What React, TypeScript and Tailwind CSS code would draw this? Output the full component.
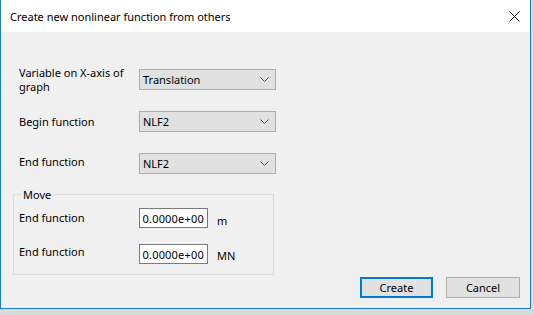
import React from "react";

const font = { fontFamily: '"Noto Sans", "Segoe UI", sans-serif' };

function Chevron() {
  return (
    <svg width="9" height="5" viewBox="0 0 9 5" className="shrink-0">
      <path d="M0.5 0.5 L4.5 4.5 L8.5 0.5" fill="none" stroke="#505050" strokeWidth="1" />
    </svg>
  );
}

function Combo({ value }: { value: string }) {
  return (
    <div className="w-[137px] h-[21px] bg-[#e1e1e1] border border-[#adadad] flex items-center justify-between pl-[3px] pr-[6px]">
      <span>{value}</span>
      <Chevron />
    </div>
  );
}

function NumBox({ value }: { value: string }) {
  return (
    <div className="w-[69px] h-[20px] bg-white border border-[#7a7a7a] flex items-center justify-end pr-[3px] tracking-[0.2px]">
      {value}
    </div>
  );
}

function Button({ label, primary }: { label: string; primary?: boolean }) {
  return (
    <div
      className={
        primary
          ? "w-[73px] h-[21px] bg-[#e1e1e1] border-2 border-[#0078d7] flex items-center justify-center"
          : "w-[74px] h-[21px] bg-[#e1e1e1] border border-[#adadad] flex items-center justify-center"
      }
    >
      {label}
    </div>
  );
}

export default function App() {
  return (
    <div
      className="w-[534px] h-[315px] bg-[#d9d9d9] overflow-hidden text-[11.5px] text-black leading-[15px]"
      style={font}
    >
      <div className="w-[531px] h-[309px] flex flex-col border-x border-b border-[#1c7bd4]">
        {/* title bar */}
        <div className="h-[32px] bg-white flex items-center justify-between pl-[9px] pr-[10px] shrink-0 text-[11px]">
          <span>Create new nonlinear function from others</span>
          <svg width="11" height="11" viewBox="0 0 11 11">
            <path d="M0.5 0.5 L10.5 10.5 M10.5 0.5 L0.5 10.5" stroke="#111" strokeWidth="1" />
          </svg>
        </div>

        {/* body */}
        <div className="flex-1 bg-[#f0f0f0] flex flex-col pt-[37px] text-[11px]">
          <div className="flex flex-col gap-[21px] pl-[18px]">
            <div className="flex items-center h-[21px]">
              <div className="w-[120px] leading-[14px]">
                Variable on X-axis of
                <br />
                graph
              </div>
              <Combo value="Translation" />
            </div>
            <div className="flex items-center h-[21px]">
              <div className="w-[120px]">Begin function</div>
              <Combo value="NLF2" />
            </div>
            <div className="flex items-center h-[21px]">
              <div className="w-[120px] mb-[5px]">End function</div>
              <Combo value="NLF2" />
            </div>
          </div>

          {/* group box */}
          <div className="relative ml-[12px] mt-[20px] w-[261px] h-[81px] border border-[#dcdcdc] pt-[13px] pl-[5px]">
            <span className="absolute left-[7px] top-[-8px] bg-[#f0f0f0] px-[2px]">Move</span>
            <div className="flex flex-col gap-[16px]">
              <div className="flex items-center h-[20px]">
                <div className="w-[120px] mb-[2px]">End function</div>
                <NumBox value="0.0000e+00" />
                <span className="ml-[9px] mt-[4px]">m</span>
              </div>
              <div className="flex items-center h-[20px]">
                <div className="w-[120px] mb-[5px]">End function</div>
                <NumBox value="0.0000e+00" />
                <span className="ml-[9px] mt-[2px]">MN</span>
              </div>
            </div>
          </div>

          <div className="flex justify-end gap-[13px] pr-[10px] mt-[2px]">
            <Button label="Create" primary />
            <Button label="Cancel" />
          </div>
        </div>
      </div>
    </div>
  );
}
